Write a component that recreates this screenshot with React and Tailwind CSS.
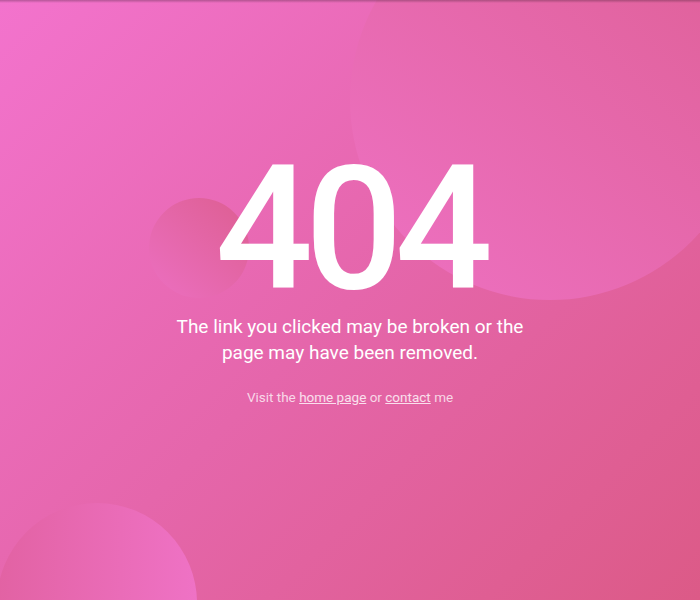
const NotFound = () => {
  return (
    <div
      className="relative h-[600px] w-full overflow-hidden bg-[linear-gradient(135deg,#f373cd_0%,#e566ab_50%,#dc5a87_100%)]"
      style={{ fontFamily: 'Roboto, "Liberation Sans", sans-serif' }}
    >
      {/* decorative bubbles */}
      <div className="absolute left-[350px] top-[-100px] h-[400px] w-[400px] rounded-full bg-linear-to-tr from-[#ee71c3] to-[#de5f95]" />
      <div className="absolute left-[149px] top-[198px] h-[100px] w-[100px] rounded-full bg-linear-to-tr from-[#ec6fc1] to-[#dd5e91]" />
      <div className="absolute left-[-3px] top-[503px] h-[200px] w-[200px] rounded-full bg-linear-to-l from-[#ef72c5] to-[#e262a3]" />
      <div className="pointer-events-none absolute inset-x-0 top-0 h-[3px] bg-linear-to-b from-black/25 to-transparent" />

      <div className="relative flex flex-col items-center pt-[154px] text-center text-white">
        <h1 className="text-[172px] font-medium leading-[150px] tracking-[-8px]">404</h1>
        <p className="mt-[10px] max-w-[360px] text-[19px] leading-[26px]">
          The link you clicked may be broken or the page may have been removed.
        </p>
        <p className="mt-[21px] text-[13.5px] leading-[20px] text-white/75">
          Visit the{' '}
          <a href="#" className="text-white/80 underline">
            home page
          </a>{' '}
          or{' '}
          <a href="#" className="text-white/80 underline">
            contact
          </a>{' '}
          me
        </p>
      </div>
    </div>
  );
};

export default function App() {
  return <NotFound />;
}
